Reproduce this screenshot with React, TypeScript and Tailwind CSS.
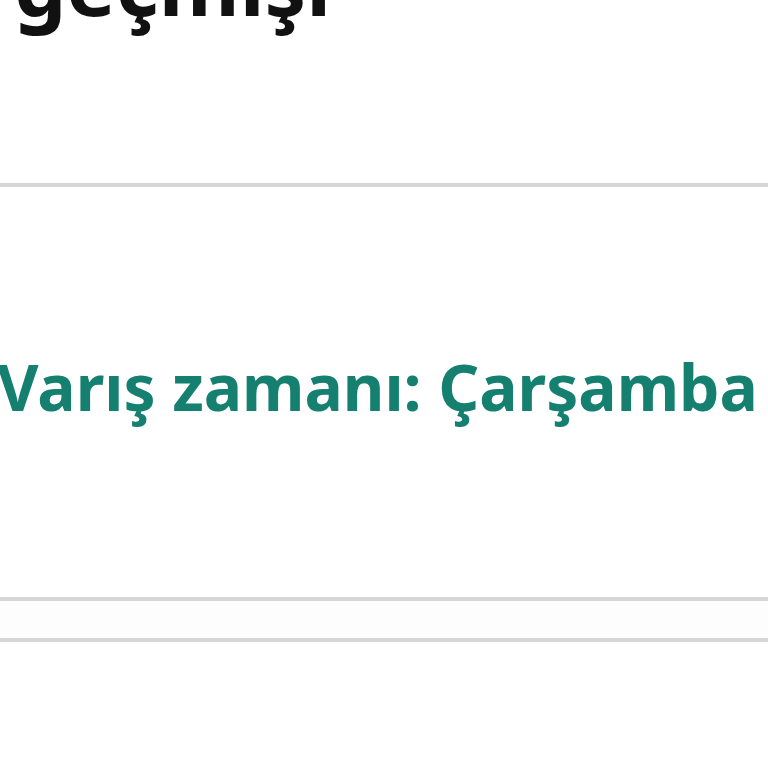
export default function App() {
  return (
    <div className="min-h-[768px] bg-white overflow-hidden" style={{ fontFamily: '"Noto Sans", "Open Sans", sans-serif' }}>
      <h1 className="mt-[-58px] pl-[14px] text-[83px] leading-none font-bold text-[#111111] whitespace-nowrap">
        geçmişi
      </h1>
      <div className="mt-[158px] h-[4px] bg-[#d6d6d6]" />
      <section className="h-[410px] pt-[168px]">
        <p className="ml-[-3px] text-[64px] leading-none font-bold text-[#15806f] whitespace-nowrap">
          Varış zamanı: Çarşamba
        </p>
      </section>
      <div className="h-[4px] bg-[#d6d6d6]" />
      <div className="h-[37px] bg-[#fdfdfd]" />
      <div className="h-[4px] bg-[#d6d6d6]" />
    </div>
  )
}
